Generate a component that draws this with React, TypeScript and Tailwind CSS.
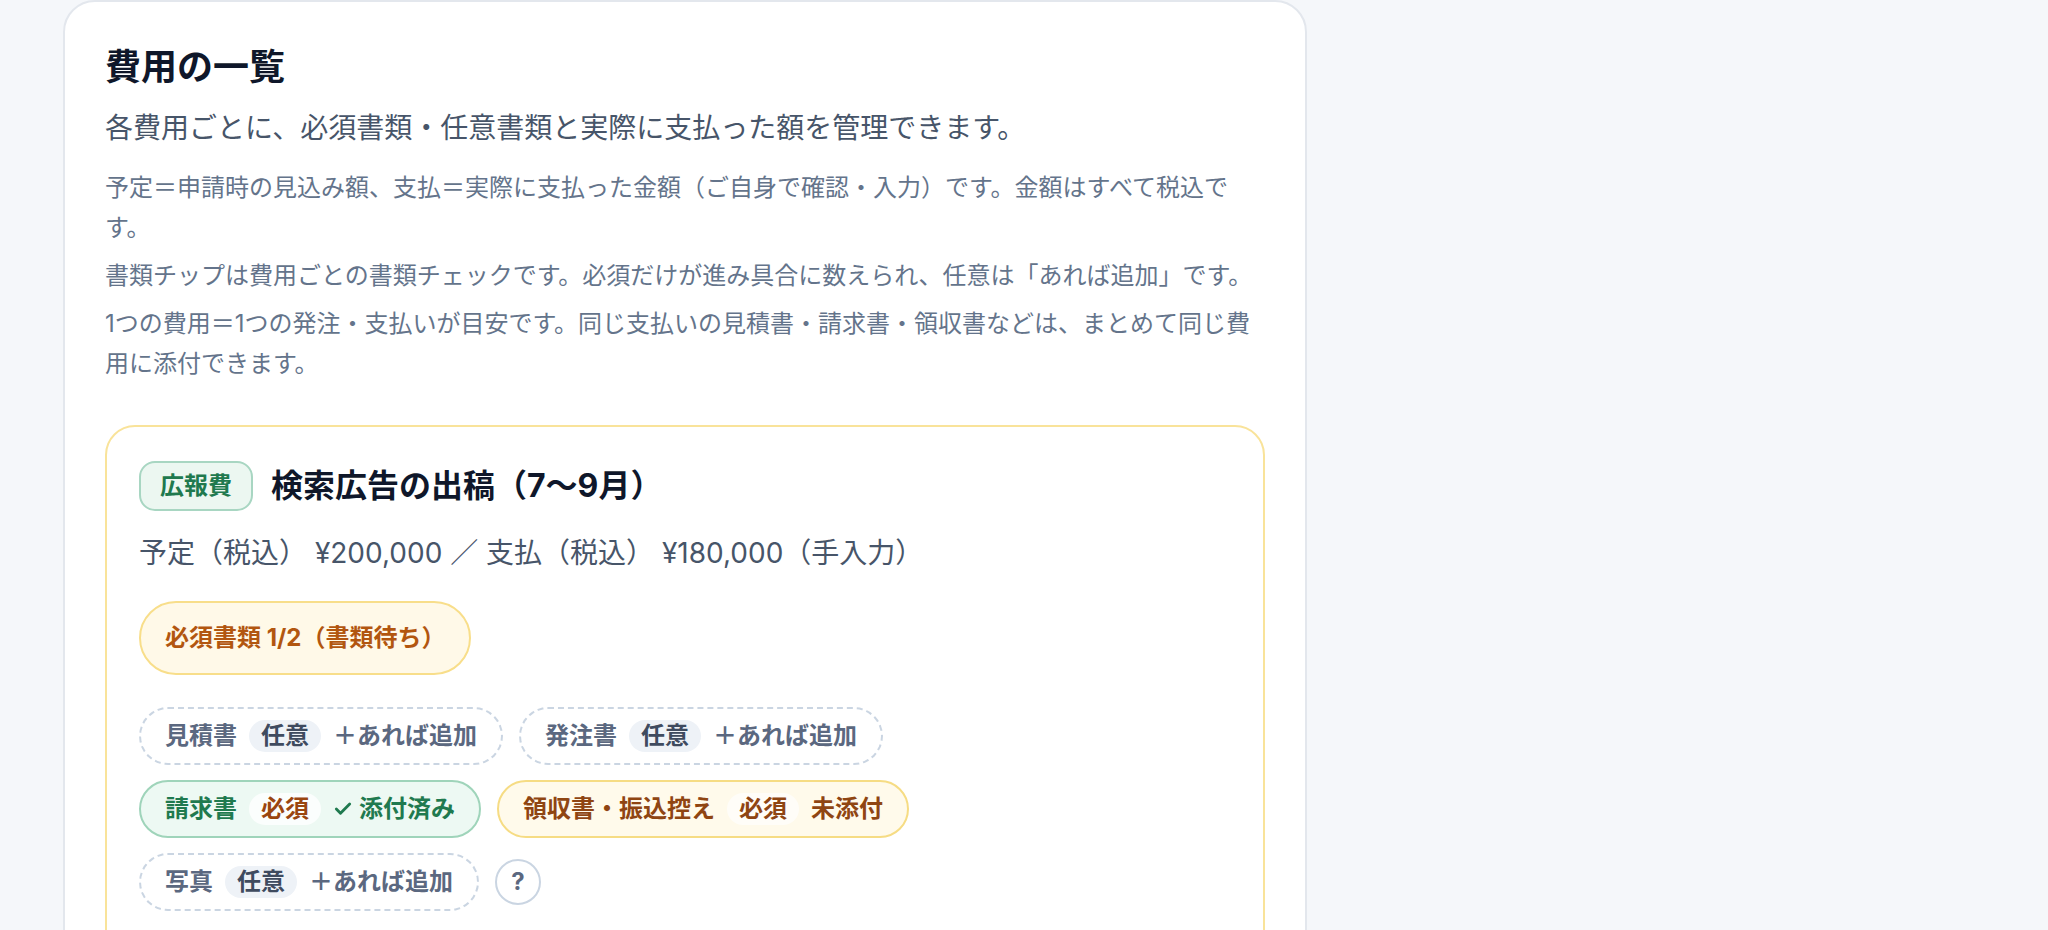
import { Check } from "lucide-react";

type DocChip = {
  label: string;
  required: boolean;
  status: "attached" | "missing" | "optional";
};

const docs: DocChip[] = [
  { label: "見積書", required: false, status: "optional" },
  { label: "発注書", required: false, status: "optional" },
  { label: "請求書", required: true, status: "attached" },
  { label: "領収書・振込控え", required: true, status: "missing" },
  { label: "写真", required: false, status: "optional" },
];

function Chip({ doc }: { doc: DocChip }) {
  if (doc.status === "attached") {
    return (
      <span className="inline-flex items-center gap-3 rounded-full border-2 border-[#9fd4ba] bg-[#edf9f3] px-6 py-[11px] text-[24px] leading-8 font-bold text-[#1f7a4f]">
        <span>{doc.label}</span>
        <span className="flex h-8 items-center rounded-full bg-white/80 px-3 text-[#9a4610]">
          必須
        </span>
        <span className="flex items-center gap-1.5">
          <Check size={20} strokeWidth={3.4} />
          添付済み
        </span>
      </span>
    );
  }

  if (doc.status === "missing") {
    return (
      <span className="inline-flex items-center gap-3 rounded-full border-2 border-[#f6dc84] bg-[#fffaeb] px-6 py-[11px] text-[24px] leading-8 font-bold text-[#8f4512]">
        <span>{doc.label}</span>
        <span className="flex h-8 items-center rounded-full bg-[#fffdf8] px-3">
          必須
        </span>
        <span>未添付</span>
      </span>
    );
  }

  return (
    <span className="inline-flex items-center gap-3 rounded-full border-2 border-dashed border-slate-300 bg-white px-6 py-[11px] text-[24px] leading-8 font-bold text-[#5b6880]">
      <span>{doc.label}</span>
      <span className="flex h-8 items-center rounded-full bg-[#eef2f7] px-3 text-[#3f4b5f]">
        任意
      </span>
      <span>＋あれば追加</span>
    </span>
  );
}

function ExpenseCard() {
  return (
    <section className="mt-[41px] rounded-[30px] border-2 border-[#f9e39a] bg-white px-8 pt-[34px] pb-12">
      <div className="flex items-center gap-[18px]">
        <span className="rounded-2xl border-2 border-[#a8d6c2] bg-[#ecf7f1] px-[19px] py-2 text-[24px] leading-[30px] font-bold text-[#20794e]">
          広報費
        </span>
        <h2 className="text-[32px] leading-[44px] font-bold text-[#0f172a]">
          検索広告の出稿（7〜9月）
        </h2>
      </div>

      <p className="mt-[22px] text-[28px] leading-10 text-[#475569]">
        予定（税込） ¥200,000 ／ 支払（税込） ¥180,000（手入力）
      </p>

      <div className="mt-7">
        <span className="inline-flex rounded-full border-2 border-[#f8de8a] bg-[#fff9e8] px-6 py-[19px] text-[24px] leading-8 font-bold text-[#b2560f]">
          必須書類 1/2（書類待ち）
        </span>
      </div>

      {/* document chips — wraps naturally like the original */}
      <div className="mt-8 flex flex-wrap items-center gap-x-4 gap-y-[15px]">
        {docs.map((d) => (
          <Chip key={d.label} doc={d} />
        ))}
        <button
          type="button"
          className="flex h-[46px] w-[46px] items-center justify-center rounded-full border-2 border-slate-300 bg-white text-[24px] font-bold text-[#5b6880]"
        >
          ?
        </button>
      </div>
    </section>
  );
}

export default function App() {
  return (
    <div className="min-h-screen bg-[#f5f7fa] [font-family:Inter,'Noto_Sans_CJK_JP',sans-serif] antialiased">
      <div className="ml-[63px] w-[1244px] rounded-[32px] border-2 border-[#e3e7ed] bg-white px-10 pt-10 pb-10">
        <h1 className="text-[36px] leading-[50px] font-bold text-[#0f172a]">
          費用の一覧
        </h1>
        <p className="mt-4 text-[28px] leading-10 text-[#475569]">
          各費用ごとに、必須書類・任意書類と実際に支払った額を管理できます。
        </p>
        <div className="mt-5 space-y-2 text-[24px] leading-10 text-[#64748b]">
          <p>
            予定＝申請時の見込み額、支払＝実際に支払った金額（ご自身で確認・入力）です。金額はすべて税込です。
          </p>
          <p>
            書類チップは費用ごとの書類チェックです。必須だけが進み具合に数えられ、任意は「あれば追加」です。
          </p>
          <p>
            1つの費用＝1つの発注・支払いが目安です。同じ支払いの見積書・請求書・領収書などは、まとめて同じ費用に添付できます。
          </p>
        </div>

        <ExpenseCard />
      </div>
    </div>
  );
}
